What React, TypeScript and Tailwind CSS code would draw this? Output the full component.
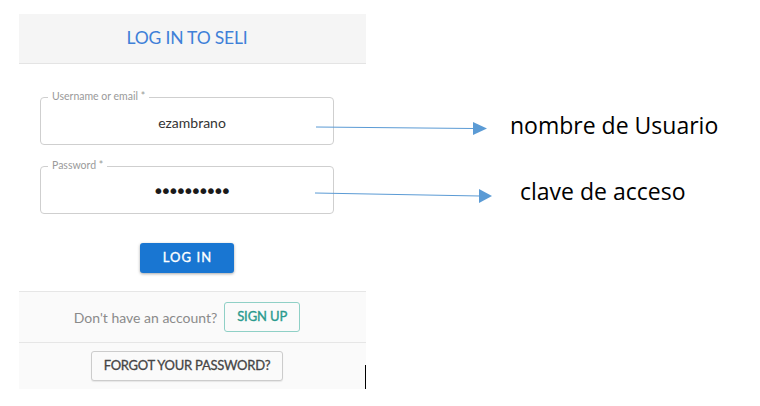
import React from "react";

const lato = { fontFamily: "Lato, 'Open Sans', sans-serif" };

function Field({ label, children }: { label: string; children: React.ReactNode }) {
  return (
    <div className="relative ml-[21px] w-[294px] h-[48px] rounded-[4px] border border-[#cfcfcf] bg-white flex items-center justify-center pl-[10px]">
      <span className="absolute left-[7px] top-[-8px] bg-white px-[4px] text-[10.5px] leading-[13px] text-[#9a9a9a]">
        {label}
      </span>
      {children}
    </div>
  );
}

export default function App() {
  return (
    <div className="relative w-[760px] h-[406px] bg-white overflow-hidden" style={lato}>
      <div className="ml-[19px] pt-[14px] w-[347px]">
        <div className="h-[50px] bg-[#f5f5f5] border-b border-[#e4e4e4] flex items-center justify-center pr-[11px]">
          <span className="text-[17.5px] text-[#3f80d8] tracking-[-0.2px]">LOG IN TO SELI</span>
        </div>
        <div className="bg-white pt-[33px] h-[227px]">
          <Field label="Username or email *">
            <span className="text-[14px] text-[#333] mt-[2px]">ezambrano</span>
          </Field>
          <div className="h-[21px]" />
          <Field label="Password *">
            <span className="text-[20px] leading-[20px] text-[#1a1a1a] tracking-[-4.3px] mt-[2px] pr-[4px]" style={{ fontFamily: "'DejaVu Sans', sans-serif" }}>
              ••••••••••
            </span>
          </Field>
          <div className="flex justify-center mt-[29px] pr-[11px]">
            <div className="w-[94px] h-[30px] rounded-[3px] bg-[#1976d2] shadow-[0_1px_3px_rgba(0,0,0,0.35)] flex items-center justify-center">
              <span className="text-[13px] text-white tracking-[1.1px] pl-[1px] [-webkit-text-stroke:0.35px_white]">LOG IN</span>
            </div>
          </div>
        </div>
        <div className="h-[51px] bg-[#fafafa] border-t border-[#e6e6e6] flex items-center justify-center gap-[7px] pr-[11px]">
          <span className="text-[14px] text-[#8a8a8a]">Don't have an account?</span>
          <div className="w-[76px] h-[30px] rounded-[3px] border border-[#8fd0c6] flex items-center justify-center">
            <span className="text-[13px] text-[#2a9a8e] tracking-[-0.1px] [-webkit-text-stroke:0.35px_#2a9a8e]">SIGN UP</span>
          </div>
        </div>
        <div className="h-[47px] bg-[#fafafa] border-t border-[#e6e6e6] flex items-center justify-center pr-[11px]">
          <div className="w-[192px] h-[30px] rounded-[3px] border border-[#cccccc] bg-[#fafafa] shadow-[0_1px_1px_rgba(0,0,0,0.08)] flex items-center justify-center">
            <span className="text-[13px] text-[#454545] tracking-[-0.25px] [-webkit-text-stroke:0.3px_#454545]">FORGOT YOUR PASSWORD?</span>
          </div>
        </div>
      </div>

      <svg className="absolute left-0 top-0" width="760" height="406">
        <line x1="316" y1="127" x2="474" y2="128.5" stroke="#5b9bd5" strokeWidth="1" />
        <polygon points="473,122 487,128.5 473,135" fill="#5b9bd5" />
        <line x1="315" y1="193" x2="480" y2="196" stroke="#5b9bd5" strokeWidth="1" />
        <polygon points="479,189 492,196 479,203" fill="#5b9bd5" />
        <line x1="365.5" y1="365" x2="365.5" y2="389" stroke="#000" strokeWidth="1" />
      </svg>

      <span className="absolute left-[510px] top-[111px] text-[23px] leading-[28px] text-black" style={{ fontFamily: "'Open Sans', sans-serif" }}>
        nombre de Usuario
      </span>
      <span className="absolute left-[520px] top-[177px] text-[23px] leading-[28px] text-black" style={{ fontFamily: "'Open Sans', sans-serif" }}>
        clave de acceso
      </span>
    </div>
  );
}
